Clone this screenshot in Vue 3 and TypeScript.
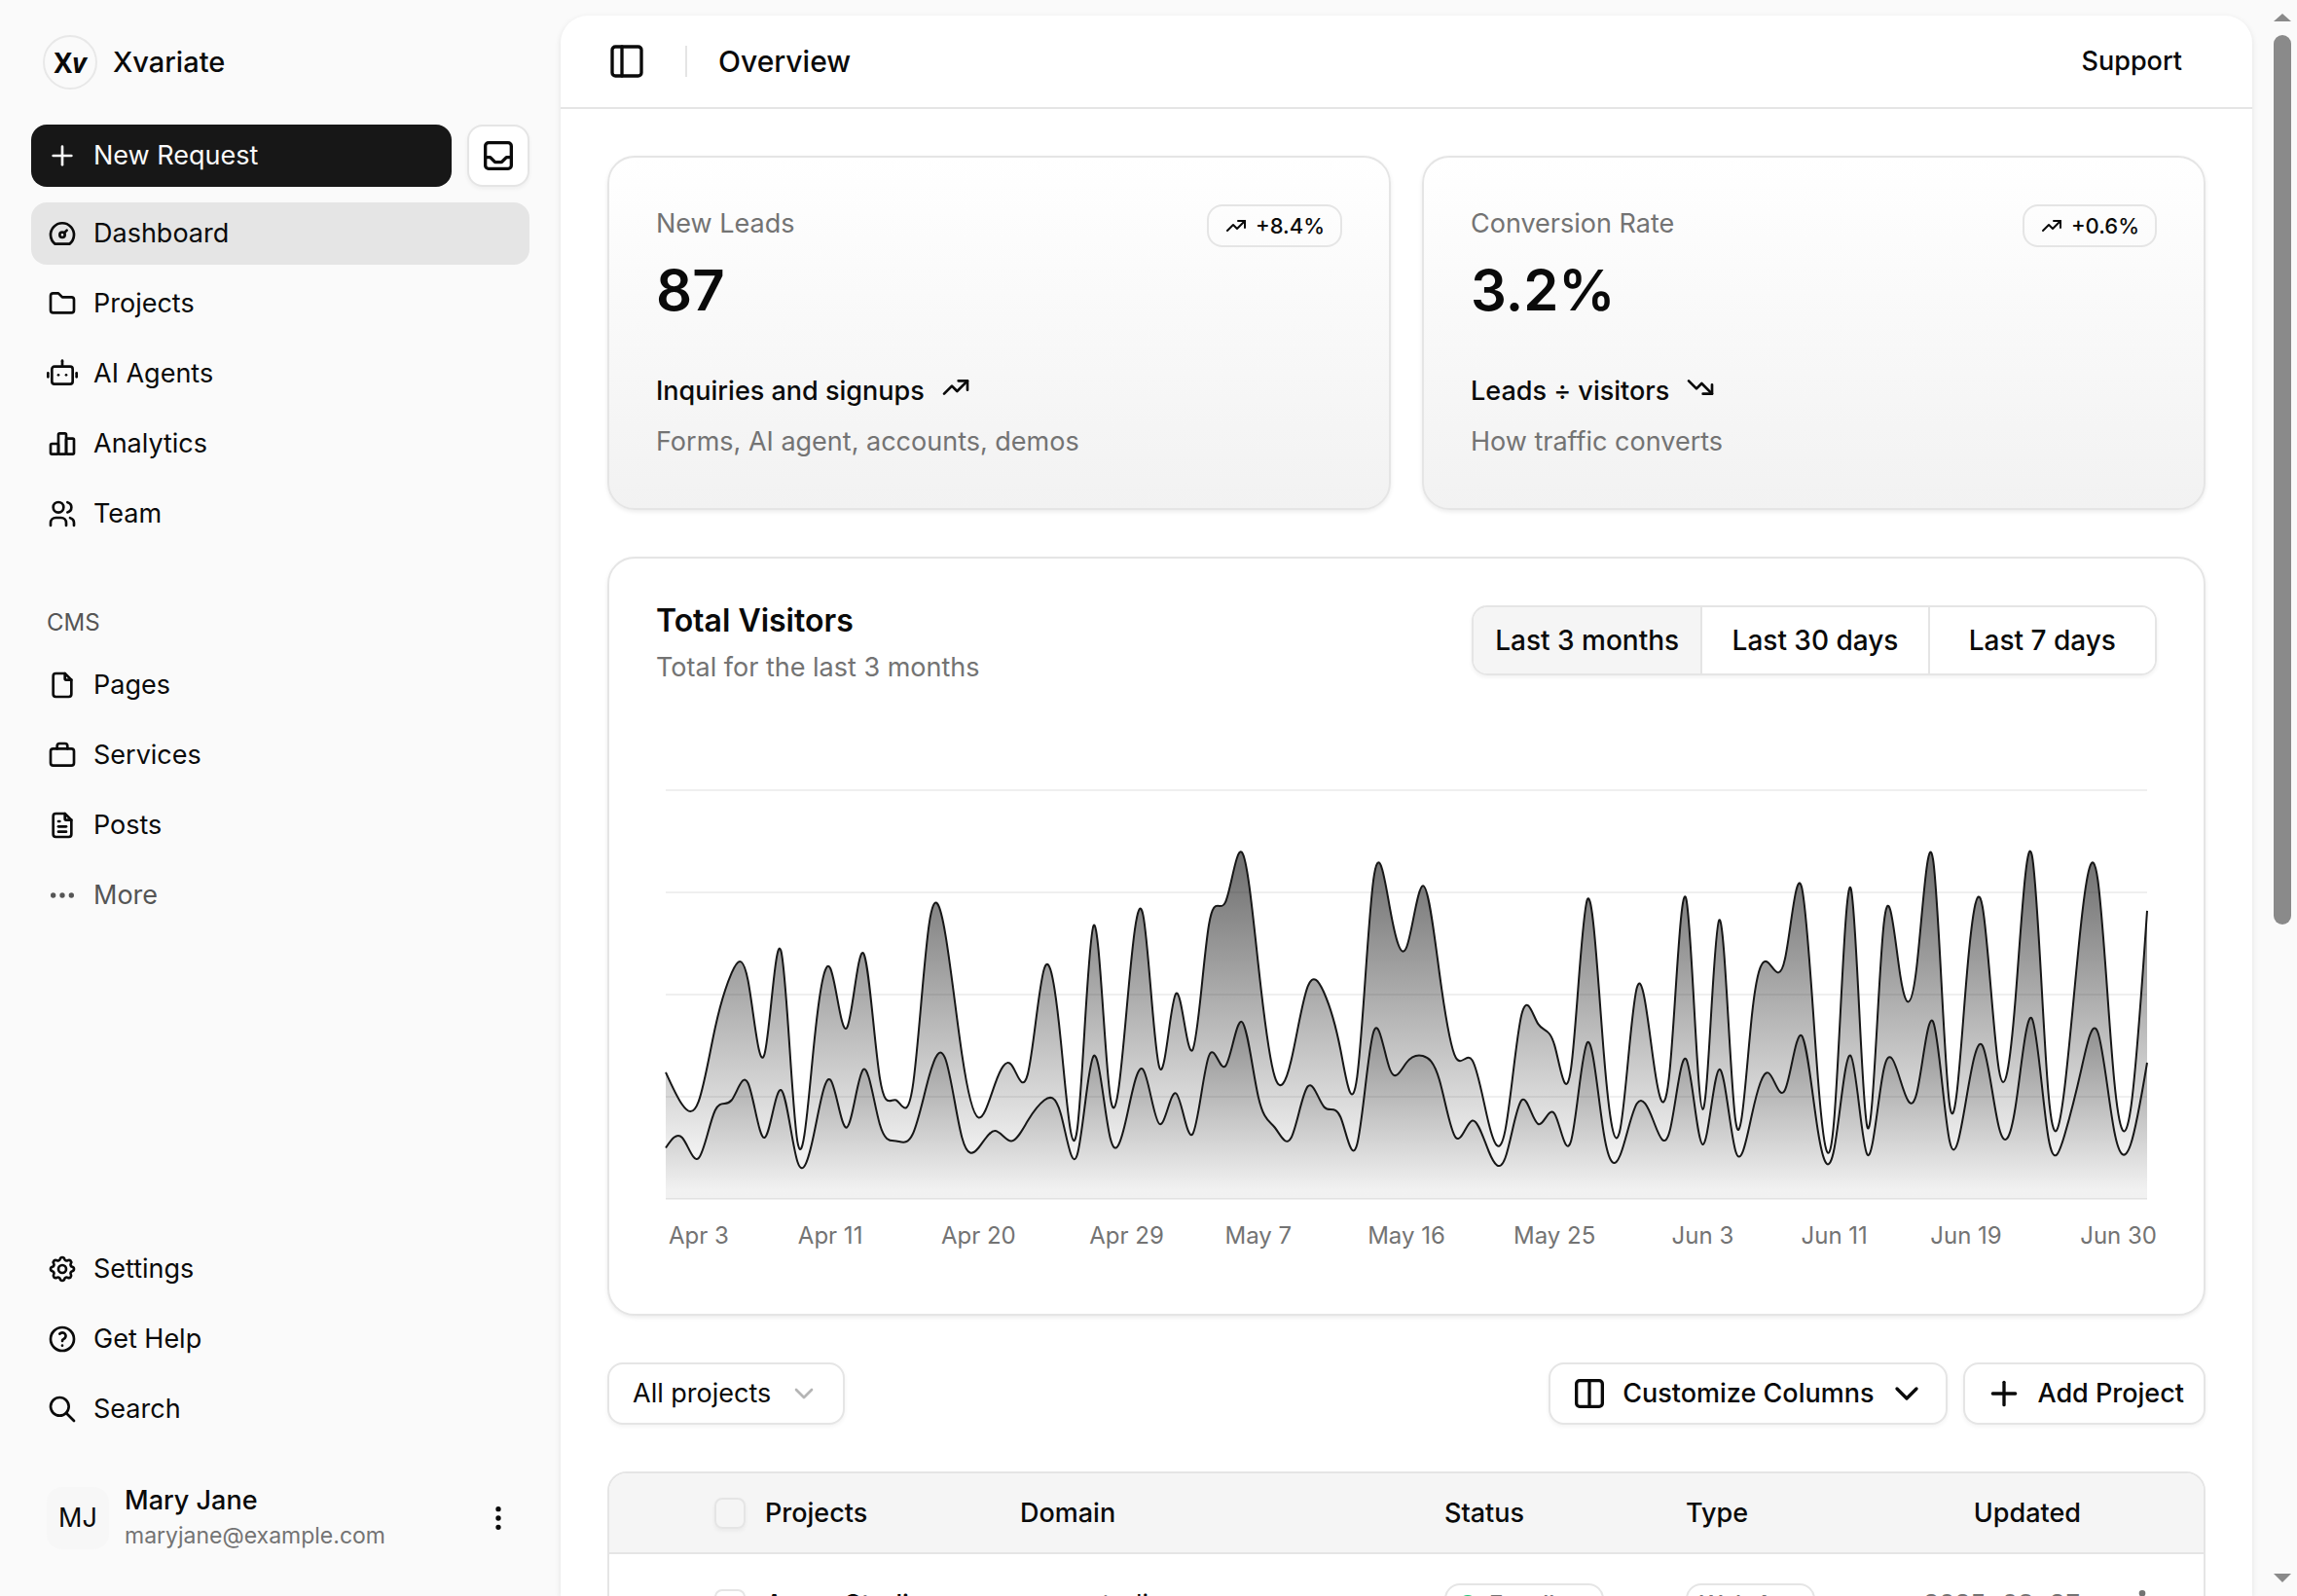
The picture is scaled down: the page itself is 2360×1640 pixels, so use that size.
<script setup lang="ts">
import { ref } from 'vue'

interface NavItem {
  label: string
  icon: string
  active?: boolean
  muted?: boolean
}

interface Stat {
  label: string
  value: string
  delta: string
  note: string
  trend: string
  detail: string
}

const icons: Record<string, string[]> = {
  plus: ['M12 5v14', 'M5 12h14'],
  inbox: [
    'M4 6a2 2 0 0 1 2-2h12a2 2 0 0 1 2 2v12a2 2 0 0 1-2 2h-12a2 2 0 0 1-2-2z',
    'M4 13h3l3 3h4l3-3h3',
  ],
  dashboard: [
    'M10 13a2 2 0 1 0 4 0a2 2 0 1 0-4 0',
    'M13.45 11.55l2.05-2.05',
    'M6.4 20a9 9 0 1 1 11.2 0z',
  ],
  folder: ['M5 4h4l3 3h7a2 2 0 0 1 2 2v8a2 2 0 0 1-2 2h-14a2 2 0 0 1-2-2v-11a2 2 0 0 1 2-2'],
  robot: [
    'M6 6.5h12a2 2 0 0 1 2 2v9.500a2 2 0 0 1-2 2h-12a2 2 0 0 1-2-2v-9.500a2 2 0 0 1 2-2z',
    'M12 6.500v-4',
    'M12 2v.01',
    'M1 11.500v3',
    'M23 11.500v3',
    'M9 13v.01',
    'M15 13v.01',
  ],
  bars: [
    'M4 12h4a1 1 0 0 1 1 1v6a1 1 0 0 1-1 1h-4a1 1 0 0 1-1-1v-6a1 1 0 0 1 1-1z',
    'M10 4h4a1 1 0 0 1 1 1v14a1 1 0 0 1-1 1h-4a1 1 0 0 1-1-1v-14a1 1 0 0 1 1-1z',
    'M16 8h4a1 1 0 0 1 1 1v10a1 1 0 0 1-1 1h-4a1 1 0 0 1-1-1v-10a1 1 0 0 1 1-1z',
  ],
  users: [
    'M5 7a4 4 0 1 0 8 0a4 4 0 1 0-8 0',
    'M3 21v-2a4 4 0 0 1 4-4h4a4 4 0 0 1 4 4v2',
    'M16 3.130a4 4 0 0 1 0 7.750',
    'M21 21v-2a4 4 0 0 0-3-3.850',
  ],
  file: [
    'M14 3v4a1 1 0 0 0 1 1h4',
    'M17 21h-10a2 2 0 0 1-2-2v-14a2 2 0 0 1 2-2h7l5 5v11a2 2 0 0 1-2 2z',
  ],
  briefcase: [
    'M5 7h14a2 2 0 0 1 2 2v9a2 2 0 0 1-2 2h-14a2 2 0 0 1-2-2v-9a2 2 0 0 1 2-2z',
    'M8 7v-2a2 2 0 0 1 2-2h4a2 2 0 0 1 2 2v2',
  ],
  fileText: [
    'M14 3v4a1 1 0 0 0 1 1h4',
    'M17 21h-10a2 2 0 0 1-2-2v-14a2 2 0 0 1 2-2h7l5 5v11a2 2 0 0 1-2 2z',
    'M9 9h1',
    'M9 13h6',
    'M9 17h6',
  ],
  dots: [
    'M4 12a1 1 0 1 0 2 0a1 1 0 1 0-2 0',
    'M11 12a1 1 0 1 0 2 0a1 1 0 1 0-2 0',
    'M18 12a1 1 0 1 0 2 0a1 1 0 1 0-2 0',
  ],
  dotsVertical: [
    'M11 5a1 1 0 1 0 2 0a1 1 0 1 0-2 0',
    'M11 12a1 1 0 1 0 2 0a1 1 0 1 0-2 0',
    'M11 19a1 1 0 1 0 2 0a1 1 0 1 0-2 0',
  ],
  settings: [
    'M10.325 4.317c.426-1.756 2.924-1.756 3.350 0a1.724 1.724 0 0 0 2.573 1.066c1.543-.94 3.310.826 2.370 2.370a1.724 1.724 0 0 0 1.065 2.572c1.756.426 1.756 2.924 0 3.350a1.724 1.724 0 0 0-1.066 2.573c.94 1.543-.826 3.310-2.370 2.370a1.724 1.724 0 0 0-2.572 1.065c-.426 1.756-2.924 1.756-3.350 0a1.724 1.724 0 0 0-2.573-1.066c-1.543.94-3.310-.826-2.370-2.370a1.724 1.724 0 0 0-1.065-2.572c-1.756-.426-1.756-2.924 0-3.350a1.724 1.724 0 0 0 1.066-2.573c-.94-1.543.826-3.310 2.370-2.370c1 .608 2.296.07 2.572-1.065z',
    'M9 12a3 3 0 1 0 6 0a3 3 0 0 0-6 0',
  ],
  help: [
    'M3 12a9 9 0 1 0 18 0a9 9 0 1 0-18 0',
    'M12 17v.01',
    'M12 13.500a1.500 1.500 0 0 1 1-1.500a2.600 2.600 0 1 0-3-4',
  ],
  search: ['M3 10a7 7 0 1 0 14 0a7 7 0 1 0-14 0', 'M21 21l-6-6'],
  sidebar: [
    'M5 3h14a2 2 0 0 1 2 2v14a2 2 0 0 1-2 2h-14a2 2 0 0 1-2-2v-14a2 2 0 0 1 2-2z',
    'M9 3v18',
  ],
  columns: [
    'M6 4h12a2 2 0 0 1 2 2v12a2 2 0 0 1-2 2h-12a2 2 0 0 1-2-2v-12a2 2 0 0 1 2-2z',
    'M12 4v16',
  ],
  chevron: ['M6 9l6 6l6-6'],
  up: ['M3 17l6-6l4 4l8-8', 'M14 7h7v7'],
  down: ['M3 7l6 6l4-4l8 8', 'M21 10v7h-7'],
  grip: [
    'M9 5v.01', 'M9 12v.01', 'M9 19v.01',
    'M15 5v.01', 'M15 12v.01', 'M15 19v.01',
  ],
}

const mainNav: NavItem[] = [
  { label: 'Dashboard', icon: 'dashboard', active: true },
  { label: 'Projects', icon: 'folder' },
  { label: 'AI Agents', icon: 'robot' },
  { label: 'Analytics', icon: 'bars' },
  { label: 'Team', icon: 'users' },
]
const cmsNav: NavItem[] = [
  { label: 'Pages', icon: 'file' },
  { label: 'Services', icon: 'briefcase' },
  { label: 'Posts', icon: 'fileText' },
  { label: 'More', icon: 'dots', muted: true },
]
const footNav: NavItem[] = [
  { label: 'Settings', icon: 'settings' },
  { label: 'Get Help', icon: 'help' },
  { label: 'Search', icon: 'search' },
]

const stats: Stat[] = [
  { label: 'New Leads', value: '87', delta: '+8.4%', note: 'Inquiries and signups', trend: 'up', detail: 'Forms, AI agent, accounts, demos' },
  { label: 'Conversion Rate', value: '3.2%', delta: '+0.6%', note: 'Leads ÷ visitors', trend: 'down', detail: 'How traffic converts' },
]

const ranges = ['Last 3 months', 'Last 30 days', 'Last 7 days']
const range = ref(ranges[0])
const filter = ref('All projects')

// Daily visitors from Apr 1 to Jun 30.
const desktop = [
  222, 97, 167, 242, 373, 301, 245, 409, 59, 261, 327, 292, 342, 137, 120, 138, 446, 364, 243, 89,
  137, 224, 138, 387, 215, 75, 383, 122, 315, 454, 165, 293, 247, 385, 481, 498, 388, 149, 227, 293,
  335, 197, 197, 448, 473, 338, 499, 315, 235, 177, 82, 81, 252, 294, 201, 213, 420, 233, 78, 340,
  178, 178, 470, 103, 439, 88, 294, 323, 385, 438, 155, 92, 492, 81, 426, 307, 371, 475, 107, 341,
  408, 169, 317, 480, 132, 141, 434, 448, 149, 103, 446,
]
const mobile = [
  150, 180, 120, 260, 290, 340, 180, 320, 110, 190, 350, 210, 380, 220, 170, 190, 360, 410, 180, 150,
  200, 170, 230, 290, 250, 130, 420, 180, 240, 380, 220, 310, 190, 420, 390, 520, 300, 210, 180, 330,
  270, 240, 160, 490, 380, 400, 420, 350, 180, 230, 140, 120, 290, 220, 250, 170, 460, 190, 130, 280,
  230, 200, 410, 160, 380, 140, 250, 370, 320, 480, 200, 150, 420, 130, 380, 350, 310, 520, 170, 290,
  450, 210, 270, 530, 180, 190, 380, 490, 200, 160, 400,
]

const plot = { left: 10, top: 10, width: 1522, height: 420, max: 1200 }
const baseline = plot.top + plot.height
const xAt = (i: number): number => plot.left + (i * plot.width) / (mobile.length - 1)
const yAt = (v: number): number => baseline - (v / plot.max) * plot.height

// Control points of a natural cubic spline through the given values.
function controls(v: number[]): [number[], number[]] {
  const n = v.length - 1
  const a = new Array<number>(n)
  const b = new Array<number>(n)
  const r = new Array<number>(n)
  a[0] = 0
  b[0] = 2
  r[0] = v[0] + 2 * v[1]
  for (let i = 1; i < n - 1; i++) {
    a[i] = 1
    b[i] = 4
    r[i] = 4 * v[i] + 2 * v[i + 1]
  }
  a[n - 1] = 2
  b[n - 1] = 7
  r[n - 1] = 8 * v[n - 1] + v[n]
  for (let i = 1; i < n; i++) {
    const m = a[i] / b[i - 1]
    b[i] -= m
    r[i] -= m * r[i - 1]
  }
  a[n - 1] = r[n - 1] / b[n - 1]
  for (let i = n - 2; i >= 0; i--) a[i] = (r[i] - a[i + 1]) / b[i]
  b[n - 1] = (v[n] + a[n - 1]) / 2
  for (let i = 0; i < n - 1; i++) b[i] = 2 * v[i + 1] - a[i + 1]
  return [a, b]
}

function curve(values: number[], reverse = false): string {
  let xs = values.map((_, i) => xAt(i))
  let ys = values.map(yAt)
  if (reverse) {
    xs = xs.reverse()
    ys = ys.reverse()
  }
  const [xa, xb] = controls(xs)
  const [ya, yb] = controls(ys)
  let d = `${xs[0]},${ys[0]}`
  for (let i = 0; i < xs.length - 1; i++) {
    d += `C${xa[i]},${ya[i]},${xb[i]},${yb[i]},${xs[i + 1]},${ys[i + 1]}`
  }
  return d
}

const total = mobile.map((m, i) => m + desktop[i])
const mobileLine = 'M' + curve(mobile)
const totalLine = 'M' + curve(total)
const mobileArea = `${mobileLine}L${plot.left + plot.width},${baseline}L${plot.left},${baseline}Z`
const totalArea = `${totalLine}L${curve(mobile, true)}Z`
const gridLines = [0, 1, 2, 3, 4].map((i) => plot.top + (i * plot.height) / 4)

const ticks = [
  { day: 2, label: 'Apr 3' },
  { day: 10, label: 'Apr 11' },
  { day: 19, label: 'Apr 20' },
  { day: 28, label: 'Apr 29' },
  { day: 36, label: 'May 7' },
  { day: 45, label: 'May 16' },
  { day: 54, label: 'May 25' },
  { day: 63, label: 'Jun 3' },
  { day: 71, label: 'Jun 11' },
  { day: 79, label: 'Jun 19' },
]
</script>

<template>
  <div class="shell">
    <aside class="sidebar">
      <div class="brand">
        <span class="logo">X<i>v</i></span>
        <span class="brand-name">Xvariate</span>
      </div>
      <div class="actions">
        <button class="new-request" type="button">
          <svg class="icon" viewBox="0 0 24 24"><path v-for="d in icons.plus" :key="d" :d="d" /></svg>
          New Request
        </button>
        <button class="inbox" type="button" aria-label="Inbox">
          <svg class="icon large" viewBox="0 0 24 24"><path v-for="d in icons.inbox" :key="d" :d="d" /></svg>
        </button>
      </div>
      <nav class="nav">
        <a v-for="item in mainNav" :key="item.label" href="#" class="nav-item" :class="{ active: item.active }">
          <svg class="icon" viewBox="0 0 24 24"><path v-for="d in icons[item.icon]" :key="d" :d="d" /></svg>
          {{ item.label }}
        </a>
      </nav>
      <h2 class="nav-title">CMS</h2>
      <nav class="nav">
        <a v-for="item in cmsNav" :key="item.label" href="#" class="nav-item" :class="{ muted: item.muted }">
          <svg class="icon" viewBox="0 0 24 24"><path v-for="d in icons[item.icon]" :key="d" :d="d" /></svg>
          {{ item.label }}
        </a>
      </nav>
      <nav class="nav foot">
        <a v-for="item in footNav" :key="item.label" href="#" class="nav-item">
          <svg class="icon" viewBox="0 0 24 24"><path v-for="d in icons[item.icon]" :key="d" :d="d" /></svg>
          {{ item.label }}
        </a>
      </nav>
      <button class="user" type="button">
        <span class="avatar">MJ</span>
        <span class="user-text">
          <span class="user-name">Mary Jane</span>
          <span class="user-mail">maryjane@example.com</span>
        </span>
        <svg class="icon" viewBox="0 0 24 24"><path v-for="d in icons.dotsVertical" :key="d" :d="d" /></svg>
      </button>
    </aside>

    <main class="main">
      <header class="topbar">
        <button class="toggle" type="button" aria-label="Toggle sidebar">
          <svg class="icon large" viewBox="0 0 24 24"><path v-for="d in icons.sidebar" :key="d" :d="d" /></svg>
        </button>
        <span class="divider"></span>
        <h1 class="page-title">Overview</h1>
        <a class="support" href="#">Support</a>
      </header>

      <div class="content">
        <section class="stats">
          <article v-for="stat in stats" :key="stat.label" class="card stat">
            <div class="stat-head">
              <div>
                <p class="stat-label">{{ stat.label }}</p>
                <p class="stat-value">{{ stat.value }}</p>
              </div>
              <span class="delta">
                <svg class="icon small" viewBox="0 0 24 24"><path v-for="d in icons.up" :key="d" :d="d" /></svg>
                {{ stat.delta }}
              </span>
            </div>
            <p class="stat-note">
              {{ stat.note }}
              <svg class="icon" viewBox="0 0 24 24"><path v-for="d in icons[stat.trend]" :key="d" :d="d" /></svg>
            </p>
            <p class="stat-detail">{{ stat.detail }}</p>
          </article>
        </section>

        <section class="card visitors">
          <div class="visitors-head">
            <div>
              <h2 class="visitors-title">Total Visitors</h2>
              <p class="visitors-sub">Total for the last 3 months</p>
            </div>
            <div class="ranges">
              <button
                v-for="r in ranges"
                :key="r"
                type="button"
                :class="{ on: r === range }"
                @click="range = r"
              >{{ r }}</button>
            </div>
          </div>
          <svg class="chart" viewBox="0 0 1542 500" role="img" aria-label="Total visitors">
            <defs>
              <linearGradient id="fillTotal" x1="0" y1="0" x2="0" y2="1">
                <stop offset="5%" stop-color="#171717" stop-opacity="1" />
                <stop offset="95%" stop-color="#171717" stop-opacity="0.1" />
              </linearGradient>
              <linearGradient id="fillMobile" x1="0" y1="0" x2="0" y2="1">
                <stop offset="5%" stop-color="#171717" stop-opacity="0.8" />
                <stop offset="95%" stop-color="#171717" stop-opacity="0.1" />
              </linearGradient>
            </defs>
            <line v-for="y in gridLines" :key="y" class="grid" :x1="plot.left" :x2="plot.left + plot.width" :y1="y" :y2="y" />
            <path :d="mobileArea" fill="url(#fillMobile)" fill-opacity="0.6" />
            <path :d="mobileLine" class="line" />
            <path :d="totalArea" fill="url(#fillTotal)" fill-opacity="0.6" />
            <path :d="totalLine" class="line" />
            <text v-for="t in ticks" :key="t.label" class="tick" :x="xAt(t.day)" y="476" text-anchor="middle">{{ t.label }}</text>
            <text class="tick" x="1542" y="476" text-anchor="end">Jun 30</text>
          </svg>
        </section>

        <div class="toolbar">
          <label class="select">
            <select v-model="filter" aria-label="Filter projects">
              <option>All projects</option>
            </select>
            <svg class="icon" viewBox="0 0 24 24"><path v-for="d in icons.chevron" :key="d" :d="d" /></svg>
          </label>
          <div class="toolbar-actions">
            <button class="button" type="button">
              <svg class="icon large" viewBox="0 0 24 24"><path v-for="d in icons.columns" :key="d" :d="d" /></svg>
              Customize Columns
              <svg class="icon large" viewBox="0 0 24 24"><path v-for="d in icons.chevron" :key="d" :d="d" /></svg>
            </button>
            <button class="button" type="button">
              <svg class="icon large" viewBox="0 0 24 24"><path v-for="d in icons.plus" :key="d" :d="d" /></svg>
              Add Project
            </button>
          </div>
        </div>

        <div class="table-wrap">
          <table class="table">
            <colgroup>
              <col class="c-grip" /><col class="c-check" /><col class="c-name" /><col class="c-domain" />
              <col class="c-status" /><col class="c-type" /><col class="c-date" /><col />
            </colgroup>
            <thead>
              <tr>
                <th></th>
                <th><input type="checkbox" aria-label="Select all" /></th>
                <th>Projects</th>
                <th>Domain</th>
                <th>Status</th>
                <th>Type</th>
                <th class="right">Updated</th>
                <th></th>
              </tr>
            </thead>
            <tbody>
              <tr>
                <td class="grip"><svg class="icon small" viewBox="0 0 24 24"><path v-for="d in icons.grip" :key="d" :d="d" /></svg></td>
                <td><input type="checkbox" aria-label="Select Acme Studio" /></td>
                <td class="name">Acme Studio</td>
                <td>acmestudio.com</td>
                <td>
                  <span class="chip">
                    <svg class="check" viewBox="0 0 20 20"><circle cx="10" cy="10" r="10" /><path d="M6 10l3 3l5-5" /></svg>
                    Excellent
                  </span>
                </td>
                <td><span class="chip">Web App</span></td>
                <td class="right mono">2025-08-27</td>
                <td class="more"><svg class="icon large" viewBox="0 0 24 24"><path v-for="d in icons.dotsVertical" :key="d" :d="d" /></svg></td>
              </tr>
            </tbody>
          </table>
        </div>
      </div>
    </main>

    <div class="scrollbar" aria-hidden="true">
      <span class="arrow up"></span>
      <span class="track"><span class="thumb"></span></span>
      <span class="arrow down"></span>
    </div>
  </div>
</template>

<style>
body {
  background: #fafafa;
}
</style>

<style scoped>
.shell {
  display: flex;
  height: 100vh;
  overflow: hidden;
  background: #fafafa;
  color: #0a0a0a;
  font-family: Inter, "Liberation Sans", sans-serif;
  font-size: 27px;
  line-height: 40px;
}
.shell *,
.shell *::before {
  box-sizing: border-box;
}
h1, h2, p {
  margin: 0;
}
a {
  color: inherit;
  text-decoration: none;
}
button {
  font: inherit;
  color: inherit;
  cursor: pointer;
}
.icon {
  flex: none;
  width: 32px;
  height: 32px;
  fill: none;
  stroke: currentColor;
  stroke-width: 2;
  stroke-linecap: round;
  stroke-linejoin: round;
}
.icon.small {
  width: 24px;
  height: 24px;
}
.icon.large {
  width: 40px;
  height: 40px;
}

.sidebar {
  flex: none;
  display: flex;
  flex-direction: column;
  width: 576px;
  padding: 32px;
}
.brand {
  display: flex;
  align-items: center;
  gap: 16px;
  height: 64px;
  padding-left: 12px;
}
.logo {
  display: flex;
  align-items: center;
  justify-content: center;
  width: 56px;
  height: 56px;
  border: 2px solid #e8e8e8;
  border-radius: 50%;
  font-family: "Open Sans", Inter, sans-serif;
  font-size: 28px;
  font-weight: 700;
}
.brand-name {
  font-size: 29px;
  font-weight: 500;
}
.actions {
  display: flex;
  gap: 16px;
  margin: 32px 0 16px;
}
.new-request {
  flex: 1;
  display: flex;
  align-items: center;
  gap: 16px;
  height: 64px;
  padding: 0 16px;
  border: 0;
  border-radius: 16px;
  background: #171717;
  color: #fafafa;
}
.inbox {
  display: flex;
  align-items: center;
  justify-content: center;
  width: 64px;
  height: 64px;
  padding: 0;
  border: 2px solid #e5e5e5;
  border-radius: 16px;
  background: #fff;
  box-shadow: 0 2px 4px rgba(0, 0, 0, 0.05);
}
.nav {
  display: flex;
  flex-direction: column;
  gap: 8px;
}
.nav-item {
  display: flex;
  align-items: center;
  gap: 16px;
  height: 64px;
  padding: 0 16px;
  border-radius: 16px;
}
.nav-item.active {
  background: #e5e5e5;
}
.nav-item.muted,
.nav-title {
  color: #555;
}
.nav-title {
  margin-top: 48px;
  padding: 0 16px;
  font-size: 24px;
  font-weight: 400;
  line-height: 64px;
}
.foot {
  margin-top: auto;
}
.user {
  display: flex;
  align-items: center;
  gap: 16px;
  margin-top: 32px;
  height: 96px;
  padding: 0 16px;
  border: 0;
  background: none;
  text-align: left;
}
.avatar {
  width: 64px;
  height: 64px;
  border-radius: 16px;
  background: #f7f7f7;
  line-height: 64px;
  text-align: center;
}
.user-text {
  flex: 1;
  display: flex;
  flex-direction: column;
}
.user-name {
  font-weight: 500;
  line-height: 36px;
}
.user-mail {
  font-size: 23px;
  line-height: 36px;
  color: #737373;
}

.main {
  flex: 1;
  min-width: 0;
  margin-top: 16px;
  border-radius: 28px 28px 0 0;
  background: #fff;
  box-shadow: 0 2px 6px rgba(0, 0, 0, 0.1);
}
.topbar {
  display: flex;
  align-items: center;
  height: 96px;
  padding: 0 72px 0 48px;
  border-bottom: 2px solid #e5e5e5;
}
.toggle {
  display: flex;
  padding: 0;
  border: 0;
  background: none;
}
.divider {
  width: 2px;
  height: 32px;
  margin: 0 32px 0 40px;
  background: #e5e5e5;
}
.page-title {
  flex: 1;
  font-size: 30px;
  font-weight: 500;
}
.support {
  font-weight: 500;
}
.content {
  display: flex;
  flex-direction: column;
  gap: 48px;
  padding: 48px;
}
.card {
  padding: 48px;
  border: 2px solid #e5e5e5;
  border-radius: 28px;
  background: #fff;
  box-shadow: 0 2px 4px rgba(0, 0, 0, 0.08);
}
.stats {
  display: grid;
  grid-template-columns: 1fr 1fr;
  gap: 32px;
}
.stat {
  height: 364px;
  background: linear-gradient(to top, #f2f2f2, #fff);
}
.stat-head {
  display: flex;
  align-items: flex-start;
  justify-content: space-between;
}
.stat-label,
.stat-detail,
.visitors-sub {
  color: #737373;
}
.stat-value {
  margin-top: 12px;
  font-size: 58px;
  font-weight: 600;
  line-height: 72px;
}
.delta {
  display: flex;
  align-items: center;
  gap: 8px;
  height: 44px;
  padding: 0 16px;
  border: 2px solid #e5e5e5;
  border-radius: 16px;
  font-size: 22px;
  font-weight: 500;
}
.stat-note {
  display: flex;
  align-items: flex-start;
  gap: 16px;
  margin-top: 48px;
  font-weight: 500;
}
.stat-detail {
  margin-top: 12px;
}
.visitors-head {
  display: flex;
  align-items: flex-start;
  justify-content: space-between;
}
.visitors-title {
  font-size: 32px;
  font-weight: 600;
  line-height: 32px;
}
.visitors-sub {
  margin-top: 12px;
}
.ranges {
  display: grid;
  grid-template-columns: 1fr 1fr 1fr;
  width: 704px;
  height: 72px;
  border: 2px solid #e5e5e5;
  border-radius: 16px;
  overflow: hidden;
  box-shadow: 0 2px 4px rgba(0, 0, 0, 0.06);
}
.ranges button {
  padding: 0;
  border: 0;
  background: #fff;
  font-size: 28px;
  font-weight: 500;
}
.ranges button + button {
  border-left: 2px solid #e5e5e5;
}
.ranges .on {
  background: #f5f5f5;
}
.chart {
  display: block;
  width: 100%;
  height: auto;
  margin-top: 96px;
}
.grid {
  stroke: #efefef;
  stroke-width: 2;
}
.line {
  fill: none;
  stroke: #171717;
  stroke-width: 2;
}
.tick {
  fill: #737373;
  font-size: 24px;
}

.toolbar,
.toolbar-actions {
  display: flex;
  justify-content: space-between;
  gap: 16px;
}
.button,
.select select {
  height: 64px;
  border: 2px solid #e5e5e5;
  border-radius: 16px;
  background: #fff;
  box-shadow: 0 2px 4px rgba(0, 0, 0, 0.05);
}
.button {
  display: flex;
  align-items: center;
  gap: 14px;
  padding: 0 20px;
  font-weight: 500;
}
.select {
  position: relative;
}
.select select {
  width: 244px;
  padding: 0 24px;
  appearance: none;
  color: inherit;
  font: inherit;
}
.select .icon {
  position: absolute;
  top: 16px;
  right: 26px;
  color: #b5b5b5;
  pointer-events: none;
}
.table-wrap {
  border: 2px solid #e5e5e5;
  border-radius: 20px;
  overflow: hidden;
}
.table {
  width: 100%;
  border-collapse: collapse;
  table-layout: fixed;
}
.c-grip { width: 92px; }
.c-check { width: 52px; }
.c-name { width: 262px; }
.c-domain { width: 436px; }
.c-status { width: 248px; }
.c-type { width: 220px; }
.c-date { width: 218px; }
th {
  height: 82px;
  padding: 0 16px;
  border-bottom: 2px solid #e5e5e5;
  background: #f5f5f5;
  font-weight: 500;
  text-align: left;
}
td {
  height: 104px;
  padding: 0 16px;
  white-space: nowrap;
}
th input,
td input {
  display: block;
  appearance: none;
  width: 32px;
  height: 32px;
  margin: 0;
  border: 2px solid #e5e5e5;
  border-radius: 8px;
  box-shadow: 0 2px 4px rgba(0, 0, 0, 0.05);
}
.name {
  font-weight: 500;
}
th.right,
td.right {
  text-align: right;
}
td .icon {
  display: block;
  margin: 0 auto;
  color: #737373;
}
td.more {
  padding-right: 32px;
}
.mono {
  color: #737373;
  font-family: "Liberation Mono", monospace;
}
.chip {
  display: flex;
  align-items: center;
  gap: 12px;
  width: max-content;
  height: 44px;
  padding: 0 12px;
  border: 2px solid #e5e5e5;
  border-radius: 16px;
  color: #737373;
  font-size: 24px;
  font-weight: 500;
}
.check {
  width: 20px;
  height: 20px;
  fill: #22c575;
}
.check path {
  fill: none;
  stroke: #fff;
  stroke-width: 2;
}

.scrollbar {
  flex: none;
  display: flex;
  flex-direction: column;
  align-items: center;
  gap: 14px;
  width: 30px;
  margin-left: 16px;
  padding: 14px 0;
}
.arrow {
  border: 9px solid transparent;
}
.arrow.up {
  border-top: 0;
  border-bottom: 8px solid #8a8a8a;
}
.arrow.down {
  border-bottom: 0;
  border-top: 9px solid #8a8a8a;
}
.track {
  flex: 1;
}
.thumb {
  display: block;
  width: 18px;
  height: 58.3%;
  border-radius: 9px;
  background: #8a8a8a;
}
</style>
